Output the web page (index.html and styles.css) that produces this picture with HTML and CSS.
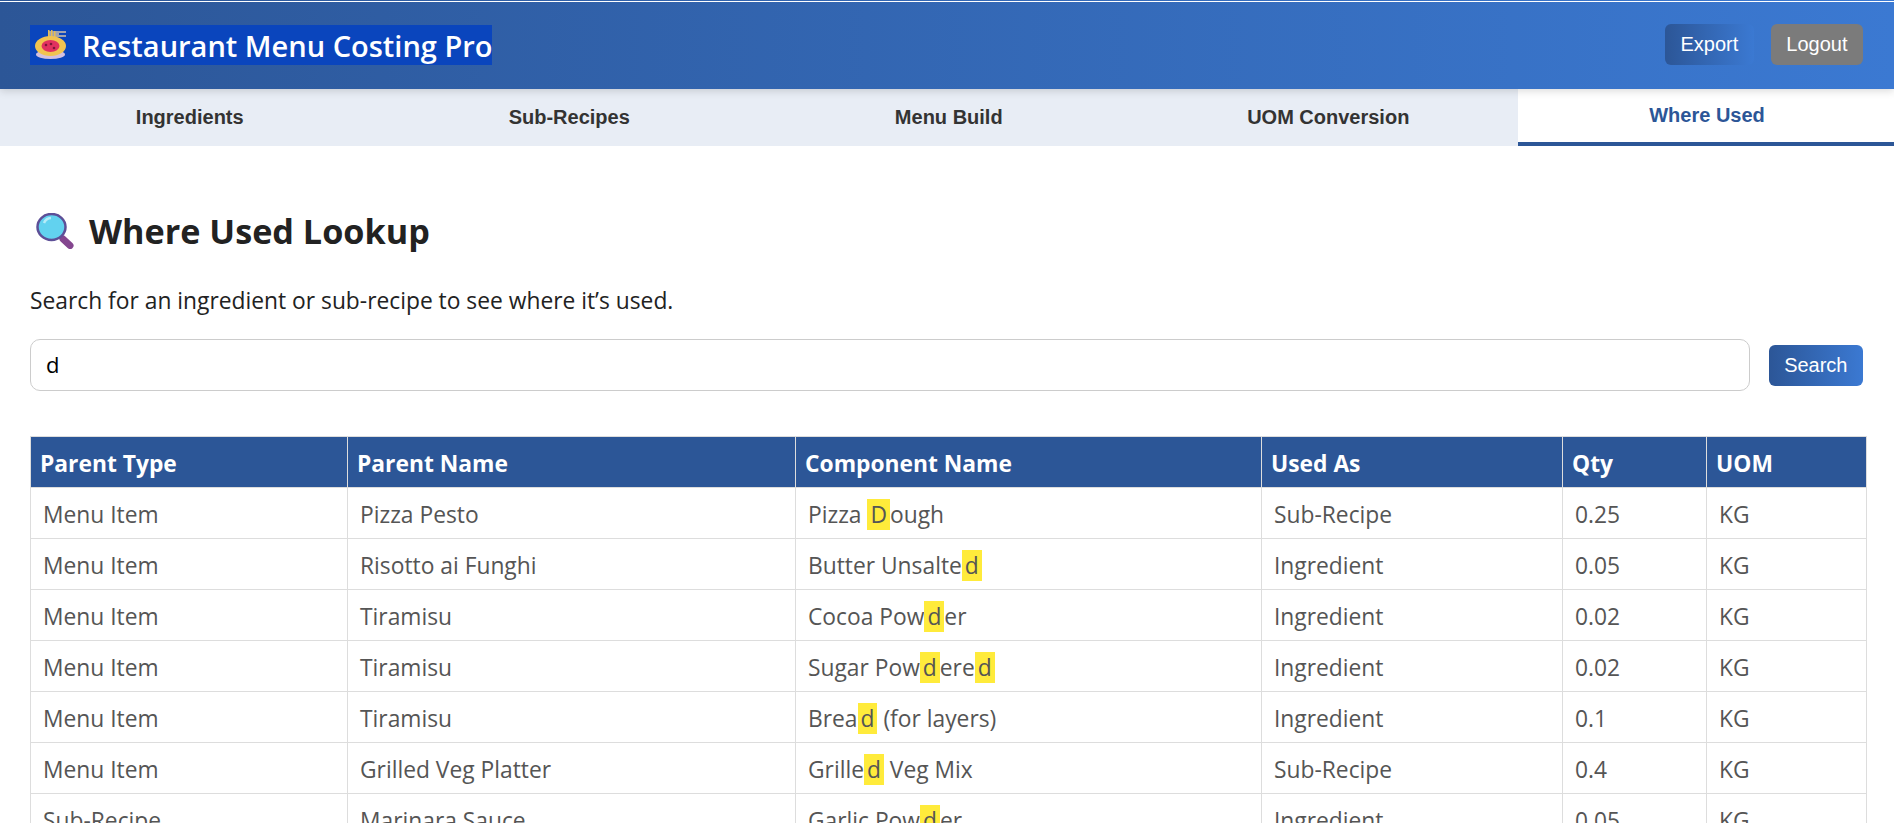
FILE: index.html
```html
<!DOCTYPE html>
<html lang="en">
<head>
    <meta charset="UTF-8">
    <meta name="viewport" content="width=device-width, initial-scale=1.0">
    <title>Restaurant Menu Costing Pro</title>
    <link rel="stylesheet" href="styles.css">
</head>
<body>
    <header>
        <h1 class="logo">
            <svg class="logo-icon" viewBox="0 0 31 29" width="31" height="29">
                <path d="M13 1h18v2h-7v2h7v2H13z" fill="#a3a3ad"/>
                <path d="M13 0h1.500v12H13zM16 0h1.500v12H16zM19 1h1.500v11H19z" fill="#e6bd55"/>
                <ellipse cx="15.500" cy="24.500" rx="14.500" ry="4.500" fill="#d3c0e0"/>
                <ellipse cx="15.500" cy="16" rx="15.500" ry="10" fill="#f2c350"/>
                <ellipse cx="15.500" cy="16" rx="9" ry="6" fill="#e1305f"/>
                <circle cx="11" cy="15" r="1.300" fill="#7d1539"/>
                <circle cx="16" cy="14" r="1.300" fill="#7d1539"/>
                <circle cx="19" cy="18" r="1.300" fill="#7d1539"/>
            </svg>
            <span>Restaurant Menu Costing Pro</span>
        </h1>
        <div class="header-buttons">
            <button class="btn">Export</button>
            <button class="btn btn-grey">Logout</button>
        </div>
    </header>
    <nav class="tabs">
        <a href="#" class="tab">Ingredients</a>
        <a href="#" class="tab">Sub-Recipes</a>
        <a href="#" class="tab">Menu Build</a>
        <a href="#" class="tab">UOM Conversion</a>
        <a href="#" class="tab active">Where Used</a>
    </nav>
    <main>
        <h2>
            <svg class="lookup-icon" viewBox="0 0 38 36" width="38" height="36">
                <path d="M27 26l7 6.500" stroke="#84468f" stroke-width="7" stroke-linecap="round"/>
                <ellipse cx="15.500" cy="14" rx="14" ry="13" fill="#62d2ef" stroke="#5d4f97" stroke-width="2.500"/>
                <path d="M8 10a8 8 0 0 1 7-5" stroke="#b5ecf8" stroke-width="2.500" fill="none"/>
            </svg>
            Where Used Lookup
        </h2>
        <p class="hint">Search for an ingredient or sub-recipe to see where it’s used.</p>
        <div class="search-row">
            <input type="text" value="d">
            <button class="btn">Search</button>
        </div>
        <table>
            <colgroup>
                <col class="c1"><col class="c2"><col class="c3"><col class="c4"><col class="c5"><col class="c6">
            </colgroup>
            <thead>
                <tr>
                    <th>Parent Type</th>
                    <th>Parent Name</th>
                    <th>Component Name</th>
                    <th>Used As</th>
                    <th>Qty</th>
                    <th>UOM</th>
                </tr>
            </thead>
            <tbody>
                <tr><td>Menu Item</td><td>Pizza Pesto</td><td>Pizza <mark>D</mark>ough</td><td>Sub-Recipe</td><td>0.25</td><td>KG</td></tr>
                <tr><td>Menu Item</td><td>Risotto ai Funghi</td><td>Butter Unsalte<mark>d</mark></td><td>Ingredient</td><td>0.05</td><td>KG</td></tr>
                <tr><td>Menu Item</td><td>Tiramisu</td><td>Cocoa Pow<mark>d</mark>er</td><td>Ingredient</td><td>0.02</td><td>KG</td></tr>
                <tr><td>Menu Item</td><td>Tiramisu</td><td>Sugar Pow<mark>d</mark>ere<mark>d</mark></td><td>Ingredient</td><td>0.02</td><td>KG</td></tr>
                <tr><td>Menu Item</td><td>Tiramisu</td><td>Brea<mark>d</mark> (for layers)</td><td>Ingredient</td><td>0.1</td><td>KG</td></tr>
                <tr><td>Menu Item</td><td>Grilled Veg Platter</td><td>Grille<mark>d</mark> Veg Mix</td><td>Sub-Recipe</td><td>0.4</td><td>KG</td></tr>
                <tr><td>Sub-Recipe</td><td>Marinara Sauce</td><td>Garlic Pow<mark>d</mark>er</td><td>Ingredient</td><td>0.05</td><td>KG</td></tr>
            </tbody>
        </table>
    </main>
</body>
</html>
```

FILE: styles.css
```css
* { box-sizing: border-box; }
html, body { height: 823px; overflow: hidden; }
body { margin: 0; font-family: 'Open Sans', 'Noto Sans', sans-serif; background: #fff; color: #222; }

/* Header */
header { height: 89px; padding: 0 31px 0 30px; display: flex; justify-content: space-between; align-items: center; background: linear-gradient(#fff, #fff) 0 1px / 100% 1px no-repeat, linear-gradient(90deg, #2c5697, #3b79d2); box-shadow: 0 2px 8px rgba(0,0,0,0.15); position: relative; }
.logo { margin: 0; display: flex; align-items: center; height: 40px; width: 462px; background: #0a45bd; color: #fff; font-size: 29px; font-weight: 600; white-space: nowrap; padding-left: 5px; }
.logo span { padding-top: 2px; }
.logo-icon { margin-right: 16px; flex-shrink: 0; }
.header-buttons { display: flex; gap: 17px; }

.btn { height: 41px; padding: 0 15.5px; border: none; border-radius: 6px; font-family: 'Liberation Sans', Arial, sans-serif; font-size: 20px; color: #fff; background: linear-gradient(90deg, #2c5697, #3b79d2); }
.btn-grey { background: #7b7b7b; }

/* Tabs */
.tabs { display: grid; grid-template-columns: repeat(4, 379.5px) 1fr; height: 57px; background: #e8edf5; }
.tab { display: flex; align-items: center; justify-content: center; font-family: 'Liberation Sans', Arial, sans-serif; font-size: 20px; font-weight: bold; color: #333; text-decoration: none; }
.tab.active { background: #fff; color: #2c5697; border-bottom: 4px solid #2c5697; padding-left: 2px; }

/* Content */
main { padding: 63px 28px 0 30px; }
h2 { margin: 0 0 33px; display: flex; align-items: center; font-size: 34.2px; font-weight: 700; line-height: 44px; color: #222; }
.lookup-icon { margin: 0 15px 0 6px; }
.hint { margin: 0 0 23px; font-size: 22.8px; line-height: 30px; color: #222; }

.search-row { display: flex; align-items: center; justify-content: space-between; padding-right: 3px; margin-bottom: 45px; }
.search-row input { width: 1720px; height: 52px; padding: 0 15px 3px; border: 1px solid #ccc; border-radius: 10px; font-family: 'Open Sans', sans-serif; font-size: 22px; color: #000; }

/* Table */
table { width: 1836px; table-layout: fixed; border-collapse: collapse; }
col.c1 { width: 317px; }
col.c2 { width: 448px; }
col.c3 { width: 466px; }
col.c4 { width: 301px; }
col.c5 { width: 144px; }
col.c6 { width: 160px; }
th, td { border: 1px solid #ddd; height: 51px; text-align: left; }
th { background: #2c5697; color: #fff; font-size: 22.8px; font-weight: 700; padding: 2px 9px 0; }
td { color: #555; font-size: 22.8px; padding: 2px 12px 0; }
mark { background: #ffeb3b; color: #555; padding: 0 3px; }
```
